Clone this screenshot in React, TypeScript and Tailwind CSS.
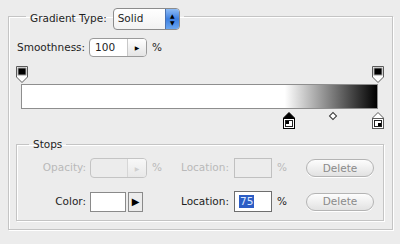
import React from 'react';

function OpacityStop() {
  return (
    <svg width="12" height="17" viewBox="0 0 12 17">
      <path d="M0.5 0.5 H11.5 V11 L6 16.5 L0.5 11 Z" fill="#fff" stroke="#5a5a5a" />
      <rect x="1.5" y="1.5" width="9" height="8" fill="#9a9a9a" />
      <rect x="2.5" y="2.5" width="7" height="6" fill="#000" />
    </svg>
  );
}

function ColorStop({ selected, dark }: { selected?: boolean; dark?: boolean }) {
  return (
    <svg width="12" height="17" viewBox="0 0 12 17">
      <path
        d="M6 0.5 L11.5 6 V16.5 H0.5 V6 Z"
        fill={selected ? '#000' : '#fff'}
        stroke={selected ? '#000' : '#5a5a5a'}
      />
      <rect x="0.5" y="6.5" width="11" height="10" fill="#fff" stroke={selected ? '#000' : '#5a5a5a'} />
      <rect x="2.5" y="8.5" width="7" height="6" fill="#fff" stroke="#222" strokeWidth="1" />
      {dark ? (
        <rect x="6" y="11" width="3" height="3" fill="#000" />
      ) : (
        <rect x="3" y="9" width="3" height="3" fill="#000" />
      )}
    </svg>
  );
}

function DeleteButton() {
  return (
    <button className="w-[68px] h-[18px] rounded-full border border-[#b4b4b4] bg-gradient-to-b from-[#fdfdfd] to-[#e2e2e2] text-[#8a8a8a] text-[10.5px] leading-none shadow-[0_1px_0_#fff]">
      Delete
    </button>
  );
}

export default function App() {
  return (
    <div className="w-[400px] h-[244px] bg-[#ececec] pt-[8px] px-[8px] text-[10.5px] text-[#1e1e1e] font-['DejaVu_Sans',sans-serif] overflow-hidden">
      <fieldset className="h-[222px] border border-[#c4c4c4] shadow-[inset_1px_1px_0_#fff,1px_1px_0_#fff] px-[8px]">
        <legend className="ml-[9px] px-[4px] h-[16px]">
          <div className="flex items-center gap-[6px] h-[22px]">
            <span>Gradient Type:</span>
            <div className="flex w-[67px] h-[22px] rounded-[4px] border border-[#8c8c8c] bg-gradient-to-b from-white to-[#f2f2f2] overflow-hidden">
              <span className="flex-1 pl-[4px] flex items-center">Solid</span>
              <span className="w-[14px] bg-gradient-to-b from-[#8dbbf5] via-[#3d7fe0] to-[#6aa6f0] border-l border-[#4a72b0] flex flex-col items-center justify-center text-[6px] leading-[7px] text-black">
                <span>▲</span>
                <span>▼</span>
              </span>
            </div>
          </div>
        </legend>

        <div className="flex items-center mt-[14px] h-[19px]">
          <span>Smoothness:</span>
          <div className="ml-[4px] flex w-[58px] h-[19px] rounded-[4px] border border-[#9a9a9a] bg-white overflow-hidden">
            <span className="flex-1 pl-[5px] flex items-center">100</span>
            <span className="w-[19px] border-l border-[#c8c8c8] bg-gradient-to-b from-white to-[#e4e4e4] flex items-center justify-center text-[6px] text-black">▶</span>
          </div>
          <span className="ml-[5px]">%</span>
        </div>

        <div className="relative ml-[4px] w-[357px] mt-[9px]">
          <div className="relative h-[18px]">
            <div className="absolute left-[-5px] top-0">
              <OpacityStop />
            </div>
            <div className="absolute left-[351px] top-0">
              <OpacityStop />
            </div>
          </div>
          <div className="h-[25px] border border-[#8e8e8e] bg-[linear-gradient(to_right,#ffffff_74%,#000000_100%)]" />
          <div className="relative h-[19px]">
            <div className="absolute left-[262px] top-[3px]">
              <ColorStop selected />
            </div>
            <div className="absolute left-[309px] top-[4px] w-[6px] h-[6px] rotate-45 border border-[#333] bg-white" />
            <div className="absolute left-[351px] top-[3px]">
              <ColorStop dark />
            </div>
          </div>
        </div>

        <fieldset className="mt-[9px] -ml-[1px] w-[368px] border border-[#c4c4c4] shadow-[inset_1px_1px_0_#fff,1px_1px_0_#fff] pb-[8px]">
          <legend className="ml-[12px] px-[4px] leading-[14px]">Stops</legend>

          <div className="flex items-center h-[20px] mt-[7px] text-[#b9b9b9]">
            <span className="w-[69px] text-right">Opacity:</span>
            <div className="ml-[4px] w-[57px] h-[20px] flex rounded-[4px] border border-[#c4c4c4] bg-[#ececec] overflow-hidden">
              <span className="flex-1" />
              <span className="w-[19px] border-l border-[#d6d6d6] bg-gradient-to-b from-[#f8f8f8] to-[#e8e8e8] flex items-center justify-center text-[6px] text-[#cfcfcf]">▶</span>
            </div>
            <span className="w-[34px] pl-[5px]">%</span>
            <span className="w-[49px]">Location:</span>
            <div className="ml-[4px] w-[38px] h-[20px] border border-[#c0c0c0] bg-[#ececec]" />
            <span className="w-[34px] pl-[5px]">%</span>
            <DeleteButton />
          </div>

          <div className="flex items-center h-[21px] mt-[13px]">
            <span className="w-[69px] text-right">Color:</span>
            <div className="ml-[4px] w-[57px] flex items-center gap-[2px]">
              <span className="w-[36px] h-[20px] border border-[#8a8a8a] bg-white" />
              <span className="w-[15px] h-[20px] border border-[#8a8a8a] bg-[#ececec] flex items-center justify-center text-[10px] text-black">▶</span>
            </div>
            <span className="w-[34px]" />
            <span className="w-[49px]">Location:</span>
            <div className="ml-[4px] w-[38px] h-[21px] border border-[#6e6e6e] bg-white flex items-center pl-[4px]">
              <span className="bg-[#2c5dc5] text-[#dce8ff] leading-[13px] px-[1px]">75</span>
            </div>
            <span className="w-[34px] pl-[5px]">%</span>
            <DeleteButton />
          </div>
        </fieldset>
      </fieldset>
    </div>
  );
}
